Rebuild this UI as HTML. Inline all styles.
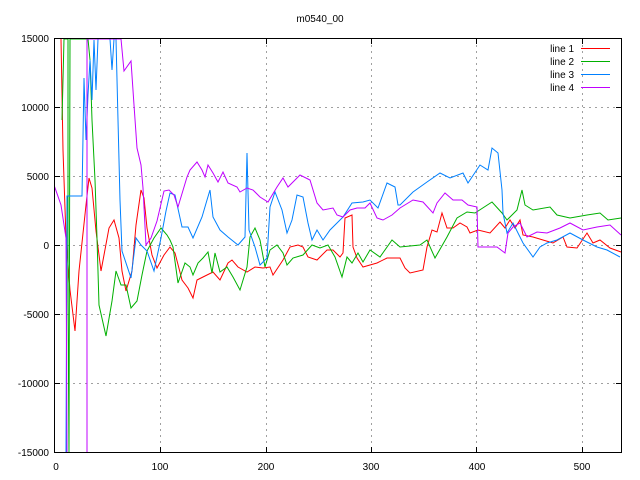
<!DOCTYPE html>
<html><head><meta charset="utf-8"><style>
html,body{margin:0;padding:0;background:#fff;}
svg{display:block;}
text{font-family:"Liberation Sans",sans-serif;font-size:10px;fill:#000;}
</style></head><body>
<svg width="640" height="480" viewBox="0 0 640 480" xmlns="http://www.w3.org/2000/svg">
<defs><clipPath id="c"><rect x="54.5" y="38.5" width="567" height="414"/></clipPath></defs>
<g stroke="#a0a0a0" stroke-dasharray="2,4" stroke-width="1">
<line x1="55" y1="107.5" x2="621" y2="107.5"/>
<line x1="55" y1="176.5" x2="621" y2="176.5"/>
<line x1="55" y1="245.5" x2="621" y2="245.5"/>
<line x1="55" y1="314.5" x2="621" y2="314.5"/>
<line x1="55" y1="383.5" x2="621" y2="383.5"/>
<line x1="160.5" y1="39" x2="160.5" y2="452"/>
<line x1="266.5" y1="39" x2="266.5" y2="452"/>
<line x1="371.5" y1="39" x2="371.5" y2="452"/>
<line x1="476.5" y1="39" x2="476.5" y2="452"/>
<line x1="582.5" y1="39" x2="582.5" y2="452"/>
</g>
<g clip-path="url(#c)" fill="none" stroke-width="1">
<polyline stroke="#ff0000" points="61,39 63,150 66,238 70,290 75,331 79,271 86,205 89,178 92,188 96,231 101,271 104,255 109,228 114,220 119,238 122,271 126,291 132,271 136,225 141,190 144,198 147,228 152,255 157,268 164,255 170,247 175,253 182,280 188,288 193,298 197,280 203,277 213,272 220,280 228,263 232,260 238,267 247,272 255,267 263,268 270,267 273,275 283,260 290,247 298,245 303,247 308,257 317,260 327,250 333,250 340,257 343,253 345,218 352,215 353,247 357,258 363,267 370,265 377,263 387,258 400,258 405,268 410,273 423,270 427,247 432,230 437,232 442,213 447,228 453,228 460,223 467,227 470,233 478,230 490,233 500,222 505,228 510,220 515,228 520,220 523,235 533,237 543,240 553,243 563,237 567,247 577,248 587,233 593,243 600,240 610,248 621,252"/>
<polyline stroke="#00b000" points="62,120 64,39 66,39 68,39 68,300 69,453 70,39 86,39 88,39 90,60 92,120 95,180 97,238 99,305 106,336 112,301 116,271 121,285 126,285 131,308 137,301 142,275 147,251 154,238 161,228 167,235 170,240 173,247 178,283 185,263 190,267 193,275 198,263 203,258 208,252 212,273 215,253 220,272 227,267 233,277 240,290 247,267 250,237 255,228 260,240 265,267 270,250 277,245 283,253 287,265 293,258 303,255 312,245 320,248 328,245 335,257 342,277 347,257 352,263 358,253 363,262 370,250 380,257 392,240 400,247 420,245 427,240 435,258 447,237 457,218 467,212 475,213 492,202 502,213 507,220 517,210 522,190 525,205 533,210 550,207 557,215 570,218 587,215 600,213 608,220 621,218"/>
<polyline stroke="#0080ff" points="66,453 67,196 82,196 84,78 86,140 88,95 90,60 92,100 94,40 96,90 98,39 104,39 110,39 112,70 114,39 116,39 118,120 120,200 122,251 131,278 136,238 141,245 147,251 154,271 161,238 166,211 170,193 175,195 182,227 188,227 193,238 202,217 207,200 210,190 213,217 220,230 228,237 238,245 245,237 247,153 249,230 255,247 260,265 267,258 270,207 275,192 282,210 287,233 292,220 297,195 303,197 308,223 312,240 317,230 323,240 330,230 337,223 343,217 352,203 363,202 370,200 378,208 387,183 395,187 398,205 400,205 413,192 427,182 440,173 450,178 463,173 468,183 480,165 488,170 492,148 498,153 502,190 503,213 507,233 513,223 523,243 533,257 540,247 547,243 557,240 570,233 583,240 597,247 607,250 620,257"/>
<polyline stroke="#c000ff" points="54,185 61,205 66,238 67,453 87,453 87,39 121,39 124,71 131,61 134,105 137,148 141,165 143,188 146,245 151,238 157,221 164,191 169,190 174,195 178,207 187,177 190,170 197,162 202,170 205,177 208,165 213,173 218,182 223,172 228,183 237,187 240,192 247,188 253,190 260,197 268,202 277,187 283,178 288,187 300,175 310,180 317,203 323,210 333,208 337,215 343,217 350,210 357,208 365,208 370,203 377,218 383,220 392,215 400,208 413,200 423,202 433,213 437,203 445,193 453,200 462,200 468,205 477,207 478,247 487,247 497,247 505,253 508,233 513,227 520,223 527,237 537,232 547,233 560,228 570,223 583,230 597,227 610,225 621,235"/>
</g>
<rect x="54.5" y="38.5" width="567" height="414" fill="none" stroke="#000" stroke-width="1"/>
<g stroke="#000" stroke-width="1">
<line x1="55" y1="107.5" x2="60" y2="107.5"/><line x1="621" y1="107.5" x2="616" y2="107.5"/>
<line x1="55" y1="176.5" x2="60" y2="176.5"/><line x1="621" y1="176.5" x2="616" y2="176.5"/>
<line x1="55" y1="245.5" x2="60" y2="245.5"/><line x1="621" y1="245.5" x2="616" y2="245.5"/>
<line x1="55" y1="314.5" x2="60" y2="314.5"/><line x1="621" y1="314.5" x2="616" y2="314.5"/>
<line x1="55" y1="383.5" x2="60" y2="383.5"/><line x1="621" y1="383.5" x2="616" y2="383.5"/>
<line x1="160.5" y1="452" x2="160.5" y2="447"/><line x1="160.5" y1="39" x2="160.5" y2="44"/>
<line x1="266.5" y1="452" x2="266.5" y2="447"/><line x1="266.5" y1="39" x2="266.5" y2="44"/>
<line x1="371.5" y1="452" x2="371.5" y2="447"/><line x1="371.5" y1="39" x2="371.5" y2="44"/>
<line x1="476.5" y1="452" x2="476.5" y2="447"/><line x1="476.5" y1="39" x2="476.5" y2="44"/>
<line x1="582.5" y1="452" x2="582.5" y2="447"/><line x1="582.5" y1="39" x2="582.5" y2="44"/>
</g>
<text x="320" y="22" text-anchor="middle">m0540_00</text>
<g text-anchor="end">
<text x="49" y="42">15000</text>
<text x="49" y="111">10000</text>
<text x="49" y="180">5000</text>
<text x="49" y="249">0</text>
<text x="49" y="318">-5000</text>
<text x="49" y="387">-10000</text>
<text x="49" y="456">-15000</text>
</g>
<g text-anchor="middle">
<text x="56" y="470">0</text>
<text x="160" y="470">100</text>
<text x="266" y="470">200</text>
<text x="371" y="470">300</text>
<text x="477" y="470">400</text>
<text x="582" y="470">500</text>
</g>
<g text-anchor="end">
<text x="574" y="52">line 1</text>
<text x="574" y="65">line 2</text>
<text x="574" y="78">line 3</text>
<text x="574" y="91">line 4</text>
</g>
<line x1="581" y1="48.5" x2="610" y2="48.5" stroke="#ff0000"/>
<line x1="581" y1="61.5" x2="610" y2="61.5" stroke="#00b000"/>
<line x1="581" y1="74.5" x2="610" y2="74.5" stroke="#0080ff"/>
<line x1="581" y1="87.5" x2="610" y2="87.5" stroke="#c000ff"/>
</svg>
</body></html>
